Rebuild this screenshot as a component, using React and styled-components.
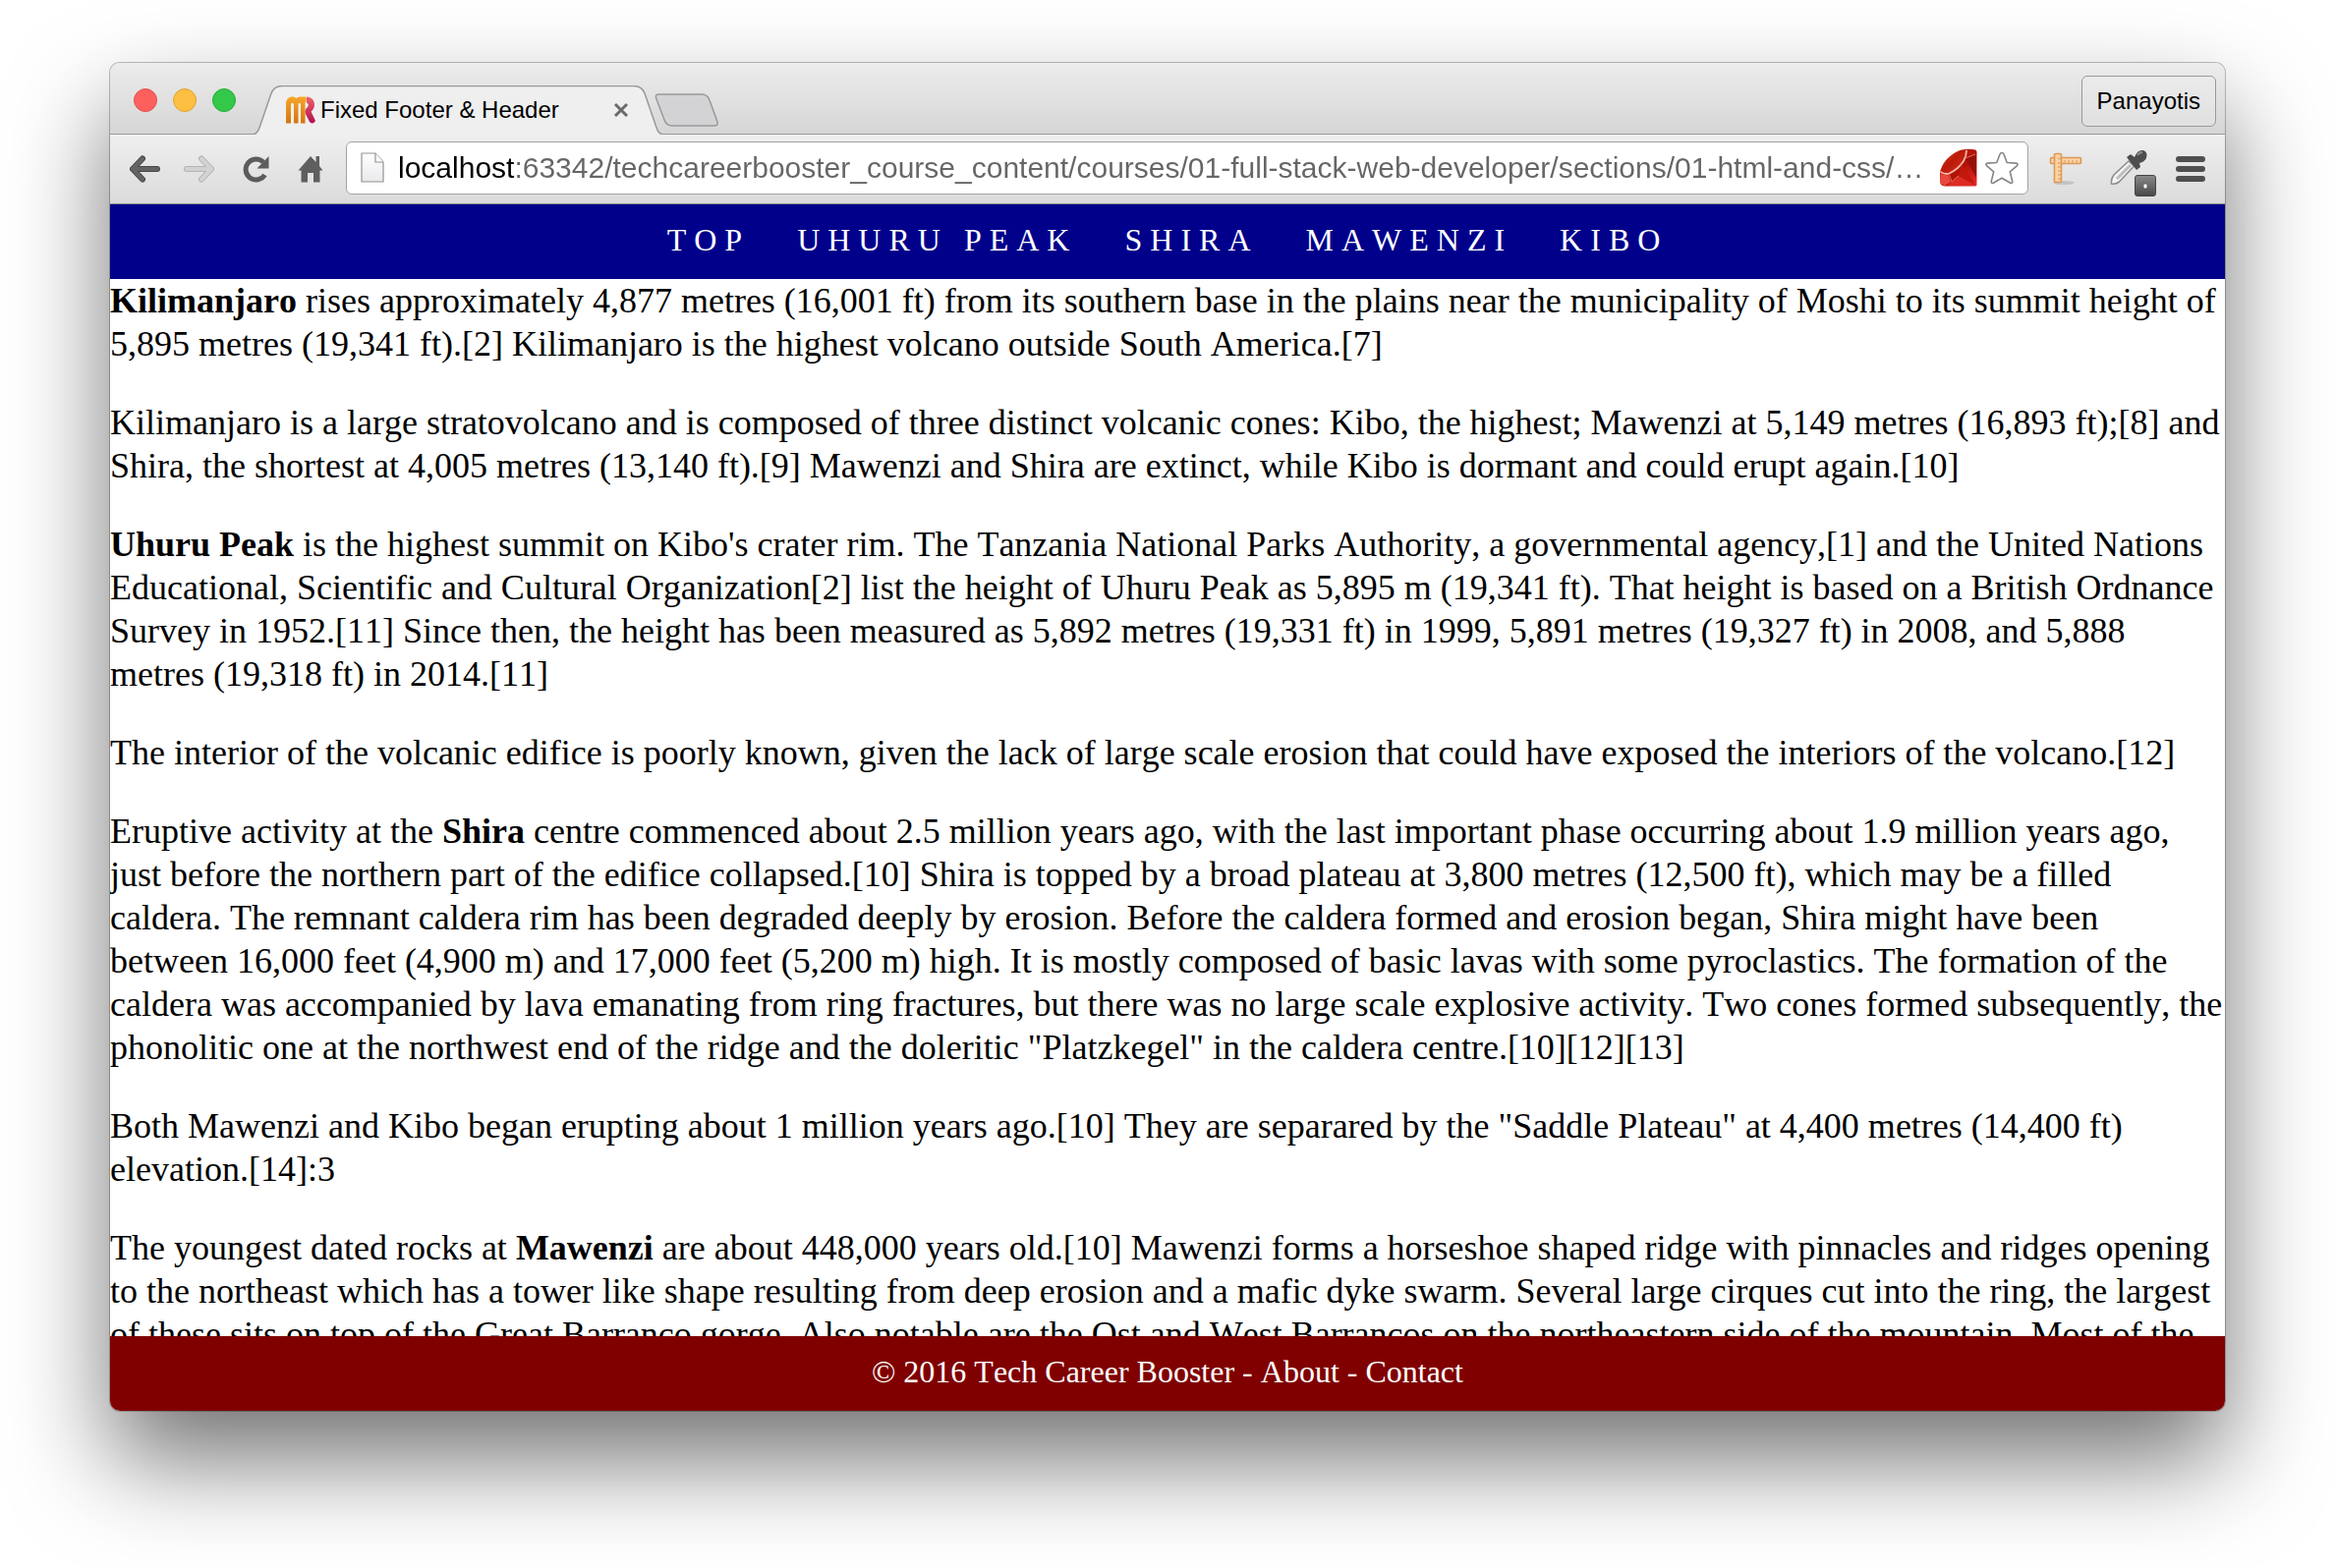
import React, { useState } from "react";
import styled, { createGlobalStyle } from "styled-components";

const SANS = `"Liberation Sans", Arial, Helvetica, sans-serif`;
const SERIF = `"Liberation Serif", "Times New Roman", Times, serif`;

const GlobalStyle = createGlobalStyle`
  *, *::before, *::after { box-sizing: border-box; }
  body { margin: 0; background: #fff; font-kerning: none; }
`;

const Desktop = styled.div`
  display: flex;
  height: 100vh;
  padding: 64px 112px 160px;
`;

const BrowserWindow = styled.div`
  display: flex;
  flex: 1;
  flex-direction: column;
  min-width: 0;
  overflow: hidden;
  border-radius: 10px;
  background: #fff;
  box-shadow: 0 0 0 1px rgba(0, 0, 0, 0.25), 0 50px 100px rgba(0, 0, 0, 0.55);
`;

const TitleBar = styled.div`
  display: flex;
  justify-content: space-between;
  height: 73px;
  padding: 0 9px 0 24px;
  border-bottom: 1px solid #999;
  background: linear-gradient(#ececec, #d6d6d6);
  font-family: ${SANS};
`;

const TitleGroup = styled.div`
  display: flex;
  align-items: flex-end;
`;

const WindowControls = styled.div`
  display: flex;
  gap: 16px;
  padding-bottom: 22px;
`;

const WindowControl = styled.button`
  width: 24px;
  height: 24px;
  padding: 0;
  border: 1px solid ${(p) => p.$edge};
  border-radius: 50%;
  background: ${(p) => p.$fill};
`;

const Tab = styled.div`
  position: relative;
  display: flex;
  flex: none;
  align-items: center;
  width: 416px;
  height: 50px;
  margin: 0 -8px -1px 18px;
  padding: 0 34px 0 32px;
`;

const TabShape = styled.svg`
  position: absolute;
  inset: 0;
  width: 100%;
  height: 100%;
`;

const TabIcon = styled.svg`
  position: relative;
  flex: none;
`;

const TabTitle = styled.span`
  position: relative;
  flex: 1;
  padding-left: 4px;
  color: #000;
  font-size: 24px;
  line-height: 28px;
  white-space: nowrap;
`;

const PlainButton = styled.button`
  position: relative;
  display: flex;
  padding: 0;
  border: 0;
  background: none;
`;

const NewTab = styled(PlainButton)`
  padding-bottom: 7px;
`;

const ProfileButton = styled.button`
  align-self: center;
  height: 52px;
  margin-top: 5px;
  padding: 0 15px;
  border: 1px solid #999;
  border-radius: 6px;
  background: linear-gradient(#ebebeb, #e0e0e0);
  color: #000;
  font-family: ${SANS};
  font-size: 24px;
`;

const Toolbar = styled.div`
  display: flex;
  align-items: center;
  height: 71px;
  padding: 0 20px 0 19px;
  border-bottom: 1px solid #8a8a8a;
  background: linear-gradient(#efefef, #dbdbdb);
`;

const NavButtons = styled.div`
  display: flex;
  gap: 24px;
  padding-right: 23px;
`;

const AddressBar = styled.label`
  display: flex;
  flex: 1;
  align-items: center;
  min-width: 0;
  height: 54px;
  margin-bottom: 2px;
  padding: 0 8px 0 14px;
  border: 1px solid #a3a3a3;
  border-radius: 6px;
  background: #fff;
`;

const AddressInput = styled.input`
  flex: 1;
  min-width: 0;
  height: 40px;
  padding: 0;
  border: 0;
  margin-left: 14px;
  outline: 0;
  background: linear-gradient(to right, #000 119px, #666 119px);
  background-clip: text;
  color: #666;
  font-family: ${SANS};
  font-size: 30px;
  -webkit-text-fill-color: transparent;
`;

const AddressActions = styled.div`
  display: flex;
  align-items: center;
  gap: 6px;
`;

const Extensions = styled.div`
  display: flex;
  align-items: center;
  gap: 20px;
  padding-left: 20px;
`;

const Header = styled.header`
  display: flex;
  align-items: center;
  justify-content: center;
  flex: none;
  height: 76px;
  padding-bottom: 4px;
  background: #00008b;
`;

const SiteNav = styled.nav`
  display: flex;
  gap: 48px;
`;

const NavLink = styled.a`
  color: #fff;
  font-family: ${SERIF};
  font-size: 32px;
  letter-spacing: 8px;
  line-height: 36px;
  text-decoration: none;
  text-transform: uppercase;
`;

const Article = styled.main`
  flex: 1;
  min-height: 0;
  overflow: hidden;
  color: #000;
  font-family: ${SERIF};
  font-size: 36px;
  line-height: 44px;
`;

const Paragraph = styled.p`
  margin: 0 0 36px;
`;

const Footer = styled.footer`
  display: flex;
  align-items: center;
  justify-content: center;
  flex: none;
  height: 76px;
  padding-bottom: 4px;
  background: #800000;
  color: #fff;
  font-family: ${SERIF};
  font-size: 32px;
  line-height: 36px;
  white-space: pre;
`;

const FooterLink = styled.a`
  color: inherit;
  text-decoration: none;
`;

const Favicon = () => (
  <TabIcon width="32" height="28" viewBox="0 0 32 28" aria-hidden="true">
    <defs>
      <linearGradient id="fav-m" x1="0" y1="0" x2="0" y2="1">
        <stop offset="0" stopColor="#f7a62a" />
        <stop offset="1" stopColor="#d57410" />
      </linearGradient>
      <linearGradient id="fav-r" x1="0" y1="0" x2="0" y2="1">
        <stop offset="0" stopColor="#f0636a" />
        <stop offset="1" stopColor="#b0104f" />
      </linearGradient>
    </defs>
    <path d="M22 .5c5 .5 8 3.500 8 8 0 3-1.500 5.500-3.500 7L31 25c-1.500 3-4.500 3-6 1l-4.500-9c-.5-3 .5-4 2-5.500 2-2 1.500-4-.5-5z" fill="url(#fav-r)" />
    <path d="M1 27.500V8C1 3 3.500.5 7.500.5c2 0 3.200.6 4.200 1.500C12.700 1 14 .5 16 .5h5c1.500 2 .5 4.500-.5 6.500v20.500H16V9c0-3-2.500-3-2.500 0v18.500H9V9c0-3-3-3-3 0v18.500z" fill="url(#fav-m)" />
  </TabIcon>
);

const PageIcon = () => (
  <svg width="24" height="32" viewBox="0 0 24 32" aria-hidden="true">
    <defs>
      <linearGradient id="page-fill" x1="0" y1="0" x2="0" y2="1">
        <stop offset="0" stopColor="#fff" />
        <stop offset="1" stopColor="#e9e9ec" />
      </linearGradient>
    </defs>
    <path d="M1 1h14l8 9v20H1z" fill="url(#page-fill)" stroke="#929292" strokeWidth="1.200" />
    <path d="M15 1v9h8" fill="#fff" stroke="#929292" strokeWidth="1.200" />
  </svg>
);

const ArrowIcon = ({ forward }) => (
  <svg width="32" height="28" viewBox="0 0 32 28" aria-hidden="true">
    <g transform={forward ? "translate(32 0) scale(-1 1)" : undefined} fill="none" strokeLinecap="round" strokeLinejoin="round">
      <path d="M14 3.500 4 14 14 24.500M4 14h25" stroke={forward ? "#b4b4b4" : "#484848"} strokeWidth="6" />
      <path d="M14 3.500 4 14 14 24.500M4 14h25" stroke={forward ? "#d2d2d2" : "#646464"} strokeWidth="4" />
    </g>
  </svg>
);

const ReloadIcon = () => (
  <svg width="34" height="28" viewBox="-3 0 34 28" aria-hidden="true">
    <path d="M23.500 20A10.500 10.500 0 1 1 22 7" fill="none" stroke="#5c5c5c" strokeWidth="5" />
    <path d="M27.500 1v12.500H15.500z" fill="#5c5c5c" />
  </svg>
);

const HomeIcon = () => (
  <svg width="28" height="28" viewBox="-2 0 28 28" aria-hidden="true">
    <path d="M13 1 .5 15.500h3V27.500H10v-9.500h6v9.500h6.500v-12h3l-3.500-4.500V1h-3.500v6z" fill="#5f5f5f" />
  </svg>
);

const RubyIcon = () => (
  <svg width="40" height="40" viewBox="0 0 40 40" aria-hidden="true">
    <defs>
      <linearGradient id="ruby" x1="0" y1="0" x2="1" y2="1">
        <stop offset="0" stopColor="#cc2a14" />
        <stop offset="0.550" stopColor="#b01206" />
        <stop offset="1" stopColor="#ee2a2a" />
      </linearGradient>
      <linearGradient id="ruby-table" x1="0" y1="0" x2="1" y2="1">
        <stop offset="0" stopColor="#e05038" />
        <stop offset="0.400" stopColor="#bc1a08" />
        <stop offset="1" stopColor="#d23220" />
      </linearGradient>
    </defs>
    <path d="M23 1.500Q31 0 37 1.500 39 2 38.500 6V37q0 1.500-2 1.500H6Q1 38 1 33v-8Q2 18 8 11q8-8 15-9.500z" fill="url(#ruby)" />
    <path d="M4 24Q5 14 14 7t13-4q3 4-4 13T8 26q-3 0-4-2z" fill="url(#ruby-table)" />
    <path d="M1.500 24q5 3 9 1.500Q20 21 25 13q3-5 3-11" fill="none" stroke="#f5b4aa" strokeWidth="1.800" />
    <path d="m27 10 11-4v24z" fill="#96100a" />
    <path d="m23 16-3 12 17 9z" fill="#c2180e" />
    <path d="M20 28 8 38h28z" fill="#dc2c24" />
    <path d="m1.500 26 8 1.500L12 34l-6 4Q1 37 1 33z" fill="#e8483e" />
    <path d="m10 26 3 8 7-6M27 10l10-4" fill="none" stroke="#ea6a5c" strokeWidth="1" />
  </svg>
);

const StarIcon = () => (
  <svg width="36" height="36" viewBox="0 0 36 36" aria-hidden="true">
    <path d="M18 2.500q1.500 0 2 1.500l3.200 8.500 9.300.6q2.500.5 1 2.500l-7.200 6.200 2.400 9.700q.2 2.500-2 1.800L18 28.200l-8.700 5.100q-2.200.7-2-1.800l2.400-9.700L2.500 15.600q-1.500-2 1-2.500l9.300-.6L16 4q.5-1.500 2-1.500z" fill="#fff" stroke="#858585" strokeWidth="1.600" strokeLinejoin="round" />
  </svg>
);

const RulerIcon = () => (
  <svg width="42" height="34" viewBox="-1 0 42 34" aria-hidden="true">
    <ellipse cx="15" cy="31" rx="11" ry="2" fill="#c4c4c4" />
    <rect x="1.500" y="5.500" width="31" height="6" rx="1" fill="#fbd3a4" stroke="#dc9858" strokeWidth="1.600" />
    <rect x="5.500" y="1.500" width="7" height="29" rx="1" fill="#fbd3a4" stroke="#dc9858" strokeWidth="1.600" />
    <path d="M9 6.500h3M9 11h3M9 15h3M9 19h3M9 23h3M9 27h3M16 8v3M20 8v3M24 8v3M28 8v3" stroke="#e6a768" strokeWidth="1.400" />
  </svg>
);

const EyedropperIcon = () => (
  <svg width="48" height="58" viewBox="0 -8 48 58" aria-hidden="true">
    <defs>
      <linearGradient id="badge" x1="0" y1="0" x2="0" y2="1">
        <stop offset="0" stopColor="#8a8a8a" />
        <stop offset="1" stopColor="#484848" />
      </linearGradient>
    </defs>
    <path d="M20 13 5 27q-3 4-2.500 9 4 1 8-2l15-16z" fill="#f4f4f4" stroke="#8d8d8d" strokeWidth="1.600" />
    <path d="M22 17 8 31" stroke="#bdbdbd" strokeWidth="3" />
    <path d="m18 9 4-3 4 3q3-8 9-7 5 2 3 8-2 4-7 5l1 4-4 3z" fill="#4e4e4e" />
    <path d="M29 7q2-3 5-3" stroke="#8a8a8a" strokeWidth="2" fill="none" />
    <rect x="26.500" y="27.500" width="21" height="21" rx="2.500" fill="url(#badge)" stroke="#444" />
    <rect x="35.500" y="36.500" width="3" height="4" rx="1" fill="#fff" />
  </svg>
);

const MenuIcon = () => (
  <svg width="30" height="28" viewBox="0 0 30 28" aria-hidden="true">
    <path d="M3 4h24M3 14h24M3 24h24" stroke="#4f4f4f" strokeWidth="6" strokeLinecap="round" />
  </svg>
);

const LINKS = ["Top", "Uhuru Peak", "Shira", "Mawenzi", "Kibo"];

const Chrome = () => {
  const [url, setUrl] = useState(
    "localhost:63342/techcareerbooster_course_content/courses/01-full-stack-web-developer/sections/01-html-and-css/…"
  );
  return (
    <>
      <TitleBar>
        <TitleGroup>
          <WindowControls>
            <WindowControl aria-label="Close" $fill="#fc605c" $edge="#e2514c" />
            <WindowControl aria-label="Minimize" $fill="#fdbf41" $edge="#e0a234" />
            <WindowControl aria-label="Zoom" $fill="#34c84a" $edge="#27ab38" />
          </WindowControls>
          <Tab>
            <TabShape viewBox="0 0 416 50" preserveAspectRatio="none" aria-hidden="true">
              <path d="M0 50Q4 49 6 43L18 8Q21 .5 29 .5H387Q395 .5 398 8L410 43Q412 49 416 50z" fill="#efefef" />
              <path d="M0 49.500Q4 49 6 43L18 8Q21 .5 29 .5H387Q395 .5 398 8L410 43Q412 49 416 49.500" fill="none" stroke="#999" strokeWidth="1.500" />
            </TabShape>
            <Favicon />
            <TabTitle>Fixed Footer &amp; Header</TabTitle>
            <PlainButton aria-label="Close tab">
              <svg width="16" height="16" viewBox="0 0 16 16" aria-hidden="true">
                <path d="M2 2l12 12M14 2 2 14" stroke="#6b6b6b" strokeWidth="3" />
              </svg>
            </PlainButton>
          </Tab>
          <NewTab aria-label="New tab">
            <svg width="66" height="34" viewBox="0 0 66 34" aria-hidden="true">
              <path d="M4 1H48q6 0 8 6l8 22q1 4-3 4H18q-6 0-8-6L2 6Q0 1 4 1z" fill="#d3d3d5" stroke="#999" strokeWidth="1.500" />
            </svg>
          </NewTab>
        </TitleGroup>
        <ProfileButton>Panayotis</ProfileButton>
      </TitleBar>
      <Toolbar>
        <NavButtons>
          <PlainButton aria-label="Back"><ArrowIcon /></PlainButton>
          <PlainButton aria-label="Forward"><ArrowIcon forward /></PlainButton>
          <PlainButton aria-label="Reload"><ReloadIcon /></PlainButton>
          <PlainButton aria-label="Home"><HomeIcon /></PlainButton>
        </NavButtons>
        <AddressBar>
          <PageIcon />
          <AddressInput aria-label="Address" value={url} onChange={(e) => setUrl(e.target.value)} />
          <AddressActions>
            <PlainButton aria-label="Ruby"><RubyIcon /></PlainButton>
            <PlainButton aria-label="Bookmark"><StarIcon /></PlainButton>
          </AddressActions>
        </AddressBar>
        <Extensions>
          <PlainButton aria-label="Ruler"><RulerIcon /></PlainButton>
          <PlainButton aria-label="Eyedropper"><EyedropperIcon /></PlainButton>
          <PlainButton aria-label="Menu"><MenuIcon /></PlainButton>
        </Extensions>
      </Toolbar>
    </>
  );
};

export default function App() {
  return (
    <>
      <GlobalStyle />
      <Desktop>
        <BrowserWindow>
          <Chrome />
          <Header>
            <SiteNav>
              {LINKS.map((name) => (
                <NavLink key={name} href={"#" + name.toLowerCase().replace(" ", "-")}>{name}</NavLink>
              ))}
            </SiteNav>
          </Header>
          <Article>
            <Paragraph id="top">
              <b>Kilimanjaro</b> rises approximately 4,877 metres (16,001 ft) from its southern base in the plains near
              the municipality of Moshi to its summit height of 5,895 metres (19,341 ft).[2] Kilimanjaro is the highest
              volcano outside South America.[7]
            </Paragraph>
            <Paragraph>
              Kilimanjaro is a large stratovolcano and is composed of three distinct volcanic cones: Kibo, the highest;
              Mawenzi at 5,149 metres (16,893 ft);[8] and Shira, the shortest at 4,005 metres (13,140 ft).[9] Mawenzi
              and Shira are extinct, while Kibo is dormant and could erupt again.[10]
            </Paragraph>
            <Paragraph id="uhuru-peak">
              <b>Uhuru Peak</b> is the highest summit on Kibo's crater rim. The Tanzania National Parks Authority, a
              governmental agency,[1] and the United Nations Educational, Scientific and Cultural Organization[2] list
              the height of Uhuru Peak as 5,895 m (19,341 ft). That height is based on a British Ordnance Survey in
              1952.[11] Since then, the height has been measured as 5,892 metres (19,331 ft) in 1999, 5,891 metres
              (19,327 ft) in 2008, and 5,888 metres (19,318 ft) in 2014.[11]
            </Paragraph>
            <Paragraph>
              The interior of the volcanic edifice is poorly known, given the lack of large scale erosion that could
              have exposed the interiors of the volcano.[12]
            </Paragraph>
            <Paragraph id="shira">
              Eruptive activity at the <b>Shira</b> centre commenced about 2.5 million years ago, with the last
              important phase occurring about 1.9 million years ago, just before the northern part of the edifice
              collapsed.[10] Shira is topped by a broad plateau at 3,800 metres (12,500 ft), which may be a filled
              caldera. The remnant caldera rim has been degraded deeply by erosion. Before the caldera formed and
              erosion began, Shira might have been between 16,000 feet (4,900 m) and 17,000 feet (5,200 m) high. It is
              mostly composed of basic lavas with some pyroclastics. The formation of the caldera was accompanied by
              lava emanating from ring fractures, but there was no large scale explosive activity. Two cones formed
              subsequently, the phonolitic one at the northwest end of the ridge and the doleritic "Platzkegel" in the
              caldera centre.[10][12][13]
            </Paragraph>
            <Paragraph>
              Both Mawenzi and Kibo began erupting about 1 million years ago.[10] They are separared by the "Saddle
              Plateau" at 4,400 metres (14,400 ft) elevation.[14]:3
            </Paragraph>
            <Paragraph id="mawenzi">
              The youngest dated rocks at <b>Mawenzi</b> are about 448,000 years old.[10] Mawenzi forms a horseshoe
              shaped ridge with pinnacles and ridges opening to the northeast which has a tower like shape resulting
              from deep erosion and a mafic dyke swarm. Several large cirques cut into the ring, the largest of these
              sits on top of the Great Barranco gorge. Also notable are the Ost and West Barrancos on the northeastern
              side of the mountain. Most of the
            </Paragraph>
          </Article>
          <Footer>
            © 2016 Tech Career Booster - <FooterLink href="#about">About</FooterLink> - <FooterLink href="#contact">Contact</FooterLink>
          </Footer>
        </BrowserWindow>
      </Desktop>
    </>
  );
}
